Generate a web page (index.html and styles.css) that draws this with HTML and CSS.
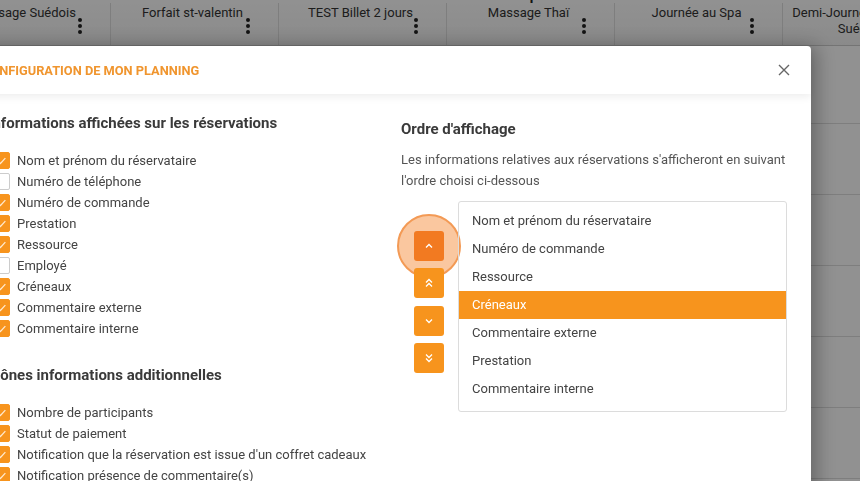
FILE: index.html
```html
<!DOCTYPE html>
<html lang="fr">
<head>
  <meta charset="UTF-8">
  <meta name="viewport" content="width=device-width, initial-scale=1.0">
  <title>Planning</title>
  <link rel="stylesheet" href="styles.css">
</head>
<body>
  <!-- Planning behind the modal -->
  <div class="planning">
    <div class="day-title">Mercredi 4 septembre 2024</div>
    <div class="cols">
      <div class="col-head"><span class="col-label">Massage Suédois</span><span class="kebab"><i></i><i></i><i></i></span></div>
      <div class="col-head"><span class="col-label">Forfait st-valentin</span><span class="kebab"><i></i><i></i><i></i></span></div>
      <div class="col-head"><span class="col-label">TEST Billet 2 jours</span><span class="kebab"><i></i><i></i><i></i></span></div>
      <div class="col-head"><span class="col-label">Massage Thaï</span><span class="kebab"><i></i><i></i><i></i></span></div>
      <div class="col-head"><span class="col-label">Journée au Spa</span><span class="kebab"><i></i><i></i><i></i></span></div>
      <div class="col-head"><span class="col-label">Demi-Journée Relaxation Suédoise</span><span class="kebab"><i></i><i></i><i></i></span></div>
      <div class="col-head"><span class="col-label">Hammam</span><span class="kebab"><i></i><i></i><i></i></span></div>
    </div>
    <div class="rows">
      <div class="row"></div>
      <div class="row"></div>
      <div class="row"></div>
      <div class="row"></div>
      <div class="row"></div>
      <div class="row"></div>
    </div>
  </div>
  <div class="backdrop"></div>

  <!-- Configuration dialog -->
  <div class="modal">
    <div class="modal-header">
      <span class="modal-title">Configuration de mon planning</span>
      <span class="modal-close">
        <svg width="12" height="12" viewBox="0 0 12 12"><path d="M1 1L11 11M11 1L1 11" stroke="#666" stroke-width="1.4" fill="none"/></svg>
      </span>
    </div>
    <div class="modal-body">
      <div class="col-left">
        <div class="section-title">Informations affichées sur les réservations</div>
        <div class="check-list">
          <label class="check-row"><span class="check on"></span>Nom et prénom du réservataire</label>
          <label class="check-row"><span class="check"></span>Numéro de téléphone</label>
          <label class="check-row"><span class="check on"></span>Numéro de commande</label>
          <label class="check-row"><span class="check on"></span>Prestation</label>
          <label class="check-row"><span class="check on"></span>Ressource</label>
          <label class="check-row"><span class="check"></span>Employé</label>
          <label class="check-row"><span class="check on"></span>Créneaux</label>
          <label class="check-row"><span class="check on"></span>Commentaire externe</label>
          <label class="check-row"><span class="check on"></span>Commentaire interne</label>
        </div>
        <div class="section-title second">Icônes informations additionnelles</div>
        <div class="check-list">
          <label class="check-row"><span class="check on"></span>Nombre de participants</label>
          <label class="check-row"><span class="check on"></span>Statut de paiement</label>
          <label class="check-row"><span class="check on"></span>Notification que la réservation est issue d'un coffret cadeaux</label>
          <label class="check-row"><span class="check on"></span>Notification présence de commentaire(s)</label>
        </div>
      </div>
      <div class="col-right">
        <div class="section-title right">Ordre d'affichage</div>
        <p class="order-desc">Les informations relatives aux réservations s'afficheront en suivant l'ordre choisi ci-dessous</p>
        <div class="order-box">
          <div class="order-btns">
            <span class="order-btn focused">
              <svg width="10" height="10" viewBox="0 0 10 10"><path d="M2 6.5L5 3.5L8 6.5" stroke="#fff" stroke-width="1.3" fill="none"/></svg>
            </span>
            <span class="order-btn">
              <svg width="10" height="10" viewBox="0 0 10 10"><path d="M2 4.5L5 1.5L8 4.5M2 8.5L5 5.5L8 8.5" stroke="#fff" stroke-width="1.3" fill="none"/></svg>
            </span>
            <span class="order-btn">
              <svg width="10" height="10" viewBox="0 0 10 10"><path d="M2 3.5L5 6.5L8 3.5" stroke="#fff" stroke-width="1.3" fill="none"/></svg>
            </span>
            <span class="order-btn">
              <svg width="10" height="10" viewBox="0 0 10 10"><path d="M2 1.5L5 4.5L8 1.5M2 5.5L5 8.5L8 5.5" stroke="#fff" stroke-width="1.3" fill="none"/></svg>
            </span>
          </div>
          <ul class="order-list">
            <li>Nom et prénom du réservataire</li>
            <li>Numéro de commande</li>
            <li>Ressource</li>
            <li class="selected">Créneaux</li>
            <li>Commentaire externe</li>
            <li>Prestation</li>
            <li>Commentaire interne</li>
          </ul>
        </div>
      </div>
    </div>
  </div>
</body>
</html>
```

FILE: styles.css
```css
/* Base */
html, body {
  margin: 0;
  padding: 0;
  overflow: hidden;
  height: 100%;
}
body {
  font-family: Roboto, "Liberation Sans", Arial, sans-serif;
  background: #fff;
  color: #333;
}

/* Planning under the backdrop */
.planning {
  margin-left: -57px;
  margin-top: -13px;
  width: 1176px;
}
.day-title {
  text-align: center;
  font-weight: bold;
  font-size: 14px;
  height: 16px;
  line-height: 16px;
  color: #222;
}
.cols {
  display: flex;
  height: 42px;
}
.col-head {
  width: 168px;
  flex: none;
  box-sizing: border-box;
  border-right: 1px solid #ddd;
  position: relative;
  padding: 2px 4px 0 0;
  text-align: center;
  font-size: 13px;
  line-height: 16px;
  color: #333;
  background: linear-gradient(#fff, #f3f3f3);
}
.col-label {
  display: inline-block;
  max-width: 160px;
}
.kebab {
  position: absolute;
  right: 28px;
  top: 15px;
  display: flex;
  flex-direction: column;
  gap: 2px;
}
.kebab i {
  display: block;
  width: 4px;
  height: 4px;
  border-radius: 50%;
  background: #222;
}
.rows {
  padding-top: 7px;
  border-top: 1px solid #ccc;
}
.row {
  height: 70px;
  border-bottom: 1px solid #ddd;
}

.backdrop {
  position: fixed;
  inset: 0;
  background: rgba(0, 0, 0, 0.43);
}

/* Modal */
.modal {
  position: fixed;
  left: -33px;
  top: 46px;
  width: 844px;
  height: 480px;
  background: #fff;
  border-radius: 4px;
  box-shadow: 6px 0 20px rgba(0, 0, 0, 0.3);
}
.modal-header {
  height: 48px;
  display: flex;
  align-items: center;
  justify-content: space-between;
  padding: 0 21px 0 15px;
  box-shadow: 0 3px 8px rgba(0, 0, 0, 0.07);
  position: relative;
}
.modal-title {
  text-transform: uppercase;
  color: #f0952e;
  font-weight: bold;
  font-size: 12.8px;
}
.modal-close {
  display: flex;
}
.modal-body {
  display: grid;
  grid-template-columns: 409px 1fr;
  padding: 0 25px;
}

.section-title {
  font-weight: bold;
  font-size: 15px;
  line-height: 20px;
  color: #3a3a3a;
  margin-top: 19px;
  margin-bottom: 17px;
  margin-left: -4px;
}
.section-title.second {
  margin-top: 26px;
  margin-bottom: 17px;
}
.section-title.right {
  margin-top: 25px;
  margin-bottom: 10px;
  margin-left: 0;
}

.check-row {
  display: flex;
  align-items: center;
  height: 21px;
  font-size: 13px;
  color: #444;
}
.check {
  width: 17px;
  height: 17px;
  box-sizing: border-box;
  border: 1px solid #ccc;
  border-radius: 2px;
  margin: 0 7px 0 1px;
  background: #fff;
}
.check.on {
  border-color: #f7941d;
  background: #f7941d url("data:image/svg+xml,%3Csvg xmlns='http://www.w3.org/2000/svg' width='16' height='16'%3E%3Cpath d='M4.5 8.5l2.2 2.2L11.5 5.5' stroke='%23ffe8cc' stroke-width='1.3' fill='none'/%3E%3C/svg%3E") center / 16px 16px no-repeat;
}

.order-desc {
  margin: 0 0 10px;
  font-size: 13px;
  line-height: 21px;
  color: #555;
}
.order-box {
  display: flex;
  gap: 14px;
}
.order-btns {
  margin-left: 13px;
  padding-top: 30px;
  display: flex;
  flex-direction: column;
  gap: 7.3px;
}
.order-btn {
  width: 30px;
  height: 30px;
  border-radius: 3px;
  background: #f7941d;
  display: flex;
  align-items: center;
  justify-content: center;
  position: relative;
}
.order-btn.focused {
  background: #f27a21;
}
.order-btn.focused::before {
  content: "";
  position: absolute;
  left: -17px;
  top: -17px;
  width: 60px;
  height: 60px;
  border-radius: 50%;
  border: 2px solid #f39a55;
  background: rgba(245, 130, 42, 0.45);
  z-index: -1;
}
.order-btn svg {
  position: relative;
}
.order-list {
  list-style: none;
  margin: 0;
  padding: 5px 0 8px;
  width: 329px;
  box-sizing: border-box;
  border: 1px solid #dcdcdc;
  border-radius: 3px;
  font-size: 13px;
  color: #444;
}
.order-list li {
  height: 28px;
  line-height: 28px;
  padding-left: 13px;
}
.order-list li.selected {
  background: #f7941d;
  color: #fff;
}
```
